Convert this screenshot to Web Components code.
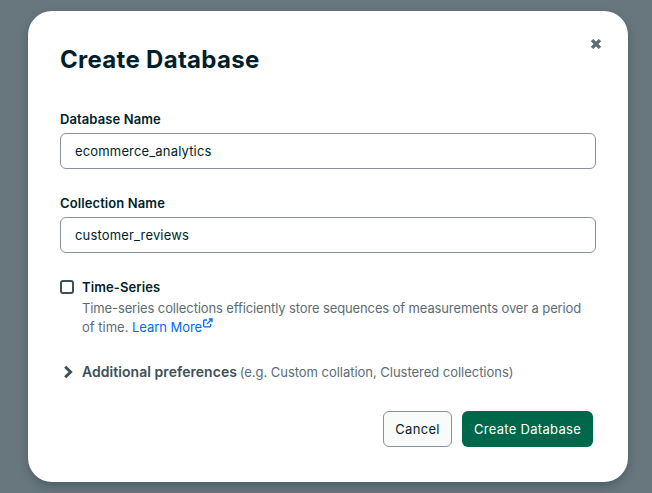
<!DOCTYPE html>
<html><head><meta charset="utf-8"><style>
html,body{margin:0;padding:0;height:100%}
body{background:#68777e;font-family:"Inter","Noto Sans",sans-serif;overflow:hidden}
</style></head><body>
<db-dialog>
<db-field label="Database Name" value="ecommerce_analytics"></db-field>
<db-field label="Collection Name" value="customer_reviews"></db-field>
<db-check title-text="Time-Series"><span class="l1">Time-series collections efficiently store sequences of measurements over a period</span><span>of time.&nbsp;</span><a href="#">Learn More</a></db-check>
<db-prefs></db-prefs>
<db-footer></db-footer>
</db-dialog>
<script>
const def=(n,html,init)=>customElements.define(n,class extends HTMLElement{constructor(){super();this.attachShadow({mode:'open'}).innerHTML=html;}connectedCallback(){init&&init(this)}});
def('db-dialog',`<style>
:host{display:block;box-sizing:border-box;width:600px;height:471px;margin:11px 0 0 28px;background:#fff;border-radius:24px;padding:35px 32px 0;position:relative;box-shadow:0 4px 10px rgba(0,30,43,.28)}
h1{margin:0 0 35px;font-size:24px;line-height:28px;font-weight:700;color:#001e2b;letter-spacing:.3px}
button{position:absolute;top:24px;right:23px;width:18px;height:18px;padding:0;border:0;background:none;display:flex}
</style><h1>Create Database</h1><button aria-label="Close"><svg width="18" height="18" viewBox="0 0 18 18"><path d="M4.400 6.200 6.200 4.400 9 7.200l2.800-2.800 1.800 1.800L10.800 9l2.800 2.800-1.800 1.800L9 10.800l-2.800 2.800-1.800-1.800L7.200 9z" fill="#5c6c75" stroke="#5c6c75" stroke-width="1" stroke-linejoin="round"/></svg></button><slot></slot>`);
def('db-field',`<style>
:host{display:block;margin-bottom:24px}
label{display:block;font-size:13px;line-height:20px;font-weight:600;color:#001e2b;margin-bottom:4px;height:20px;letter-spacing:.1px}
.i{box-sizing:border-box;height:36px;border:1px solid #889397;border-radius:6px;padding:0 14px;font-size:13px;line-height:34px;color:#001e2b;letter-spacing:.16px}
</style><label></label><div class="i"></div>`,el=>{el.shadowRoot.querySelector('label').textContent=el.getAttribute('label');el.shadowRoot.querySelector('.i').textContent=el.getAttribute('value')});
def('db-check',`<style>
:host{display:grid;grid-template-columns:14px 1fr;column-gap:8px;margin-top:0;font-size:13px;line-height:19px;color:#5c6c75}
.b{box-sizing:border-box;width:14px;height:14px;border:2px solid #3d4f58;border-radius:3px;margin-top:3px}
.t{font-weight:600;color:#001e2b;height:22px;line-height:20px;letter-spacing:.1px}
::slotted(.l1){display:block;letter-spacing:-.12px;white-space:nowrap}
::slotted(a){color:#016bf8;text-decoration:none;letter-spacing:-.05px}
svg{vertical-align:4px;margin-left:1px}
</style><div class="b"></div><div><div class="t"></div><slot></slot><svg width="10" height="10" viewBox="0 0 10 10" fill="none" stroke="#016bf8" stroke-width="1.3"><path d="M4 2H1.500a.8.8 0 0 0-.8.800V8a.8.8 0 0 0 .8.800h5.300a.8.8 0 0 0 .8-.8V6"/><path d="M4 6 8.500 1.500M5.800 1h3.200v3.200" /></svg></div>`,el=>{el.shadowRoot.querySelector('.t').textContent=el.getAttribute('title-text')});
def('db-prefs',`<style>
:host{display:flex;align-items:center;gap:8px;margin-top:25px;font-size:13px;line-height:20px;color:#5c6c75;letter-spacing:-.03px}
b{color:#3d4f58;font-size:14px;font-weight:600;letter-spacing:.05px;margin-right:-1px}
svg{width:14px;height:14px}
</style><svg viewBox="0 0 14 14"><path d="M5.200 1.700 10.600 7 5.200 12.300" fill="none" stroke="#3d4f58" stroke-width="3"/></svg><span><b>Additional preferences</b> (e.g. Custom collation, Clustered collections)</span>`);
def('db-footer',`<style>
:host{display:flex;justify-content:flex-end;gap:10px;margin:29px 3px 0 0}
span{box-sizing:border-box;height:36px;display:flex;align-items:center;justify-content:center;border-radius:6px;font-size:13px;font-weight:400;letter-spacing:.3px}
.c{width:69px;background:#f9fbfa;border:1px solid #889397;color:#001e2b}
.p{width:131px;background:#00684a;color:#fff}
</style><span class="c">Cancel</span><span class="p">Create Database</span>`);
</script>
</body></html>
